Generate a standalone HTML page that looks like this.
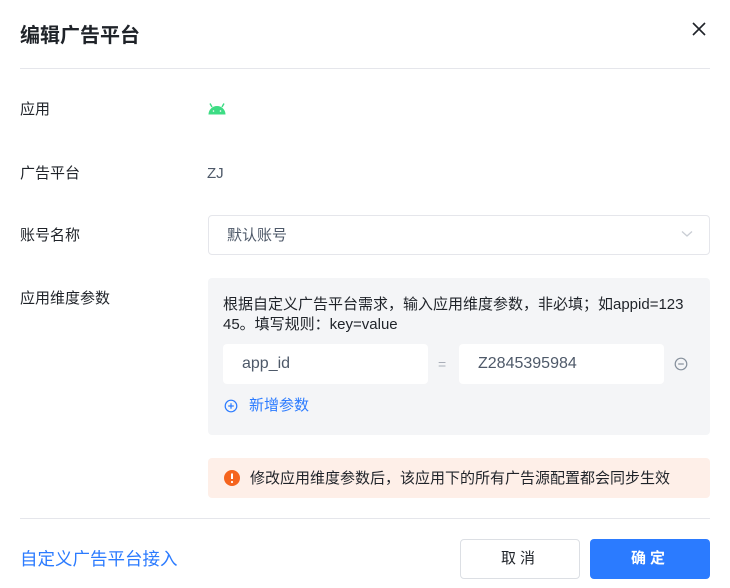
<!DOCTYPE html>
<html><head><meta charset="utf-8"><style>
*{margin:0;padding:0;box-sizing:border-box}
body{width:730px;height:588px;background:#fff;font-family:"Liberation Sans","Noto Sans CJK SC",sans-serif;color:#1f2329;position:relative;overflow:hidden}
.a{position:absolute}
.lbl{position:absolute;left:20px;font-size:15px;color:#1f2329;line-height:20px}
</style></head><body>
<div class="a" style="left:20px;top:22px;font-size:20px;font-weight:bold;line-height:28px">编辑广告平台</div>
<svg class="a" style="left:690px;top:20px" width="18" height="18" viewBox="0 0 18 18"><path d="M3 3L15 15M15 3L3 15" stroke="#1f2329" stroke-width="1.6"/></svg>
<div class="a" style="left:20px;top:68px;width:690px;height:1px;background:#e5e6eb"></div>

<div class="lbl" style="top:100px">应用</div>
<svg class="a" style="left:207px;top:101px" width="20" height="14" viewBox="0 0 20 14"><path d="M1.5 13.5A8.5 8.5 0 0 1 18.5 13.5Z" fill="#3ddc84"/><path d="M5 6L3 2.5M15 6L17 2.5" stroke="#3ddc84" stroke-width="1.4"/><circle cx="6.5" cy="10" r="0.8" fill="#fff"/><circle cx="13.5" cy="10" r="0.8" fill="#fff"/></svg>

<div class="lbl" style="top:164px">广告平台</div>
<div class="a" style="left:207px;top:164px;font-size:15px;line-height:20px;color:#4e5969">ZJ</div>

<div class="lbl" style="top:226px">账号名称</div>
<div class="a" style="left:208px;top:215px;width:502px;height:40px;border:1px solid #e5e6eb;border-radius:4px"></div>
<div class="a" style="left:227px;top:226px;font-size:15px;line-height:20px;color:#4e5969">默认账号</div>
<svg class="a" style="left:681px;top:230px" width="12" height="8" viewBox="0 0 12 8"><path d="M1 1.5L6 6L11 1.5" stroke="#c9cdd4" stroke-width="1.3" fill="none"/></svg>

<div class="lbl" style="top:289px">应用维度参数</div>
<div class="a" style="left:208px;top:278px;width:502px;height:157px;background:#f4f5f7;border-radius:4px"></div>
<div class="a" style="left:223px;top:295px;width:480px;font-size:15px;line-height:20px;color:#1f2329;white-space:nowrap">根据自定义广告平台需求，输入应用维度参数，非必填；如appid=123<br>45。填写规则：key=value</div>
<div class="a" style="left:223px;top:344px;width:205px;height:40px;background:#fff;border-radius:4px"></div>
<div class="a" style="left:242px;top:354px;font-size:16px;line-height:20px;color:#4e5969">app_id</div>
<div class="a" style="left:438px;top:354px;font-size:14px;line-height:20px;color:#a9aeb8">=</div>
<div class="a" style="left:459px;top:344px;width:205px;height:40px;background:#fff;border-radius:4px"></div>
<div class="a" style="left:478px;top:354px;font-size:16px;line-height:20px;color:#4e5969">Z2845395984</div>
<svg class="a" style="left:674px;top:357px" width="14" height="14" viewBox="0 0 14 14"><circle cx="7" cy="7" r="5.8" stroke="#86909c" stroke-width="1.2" fill="none"/><path d="M4.2 7H9.8" stroke="#86909c" stroke-width="1.2"/></svg>
<svg class="a" style="left:224px;top:399px" width="14" height="14" viewBox="0 0 14 14"><circle cx="7" cy="7" r="5.8" stroke="#2b7bff" stroke-width="1.2" fill="none"/><path d="M4.2 7H9.8M7 4.2V9.8" stroke="#2b7bff" stroke-width="1.2"/></svg>
<div class="a" style="left:249px;top:396px;font-size:15px;line-height:20px;color:#2b7bff">新增参数</div>

<div class="a" style="left:208px;top:458px;width:502px;height:40px;background:#feefe8;border-radius:4px"></div>
<svg class="a" style="left:223px;top:469px" width="18" height="18" viewBox="0 0 18 18"><circle cx="9" cy="9" r="8" fill="#f5641e"/><path d="M9 4.5V10" stroke="#fff" stroke-width="2"/><circle cx="9" cy="13" r="1.1" fill="#fff"/></svg>
<div class="a" style="left:250px;top:469px;font-size:15px;line-height:20px;color:#1f2329">修改应用维度参数后，该应用下的所有广告源配置都会同步生效</div>

<div class="a" style="left:20px;top:518px;width:690px;height:1px;background:#e5e6eb"></div>
<div class="a" style="left:20px;top:547px;font-size:17.5px;line-height:24px;color:#2b7bff">自定义广告平台接入</div>
<div class="a" style="left:460px;top:539px;width:120px;height:40px;border:1px solid #dcdfe4;border-radius:4px;font-size:15px;line-height:38px;text-align:center;color:#1f2329;letter-spacing:4px">取消</div>
<div class="a" style="left:590px;top:539px;width:120px;height:40px;background:#2b7bff;border-radius:4px;font-size:15px;line-height:40px;text-align:center;color:#fff;font-weight:bold;letter-spacing:4px">确定</div>
</body></html>
